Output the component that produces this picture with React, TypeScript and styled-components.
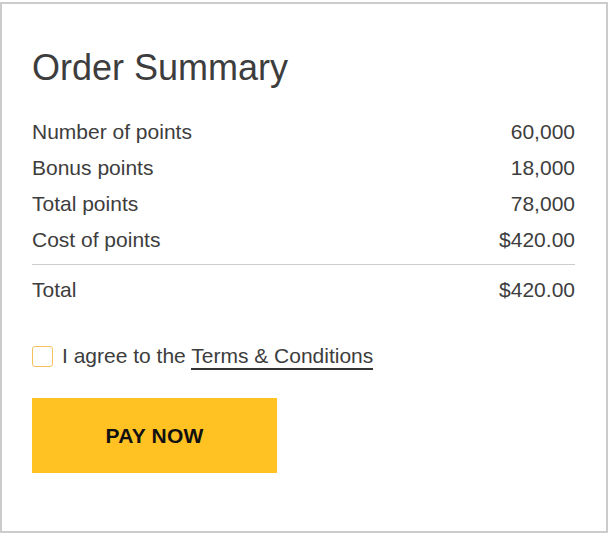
import React from "react";
import styled, { createGlobalStyle } from "styled-components";

const Global = createGlobalStyle`
  html, body { margin: 0; padding: 0; background: #fff; }
  body { font-family: "Liberation Sans", Arial, sans-serif; }
`;

const Page = styled.div`
  padding-top: 2px;
`;

const Card = styled.section`
  box-sizing: border-box;
  width: 608px;
  height: 531px;
  border: 2px solid #cccccc;
  padding: 44px 31px 0 30px;
  color: #3d3d3d;
`;

const Title = styled.h1`
  margin: 0 0 26px;
  font-size: 36px;
  font-weight: 400;
  line-height: 40px;
  color: #3d3d3d;
`;

const Row = styled.div`
  display: flex;
  justify-content: space-between;
  align-items: center;
  height: 36px;
  font-size: 21px;
`;

const Divider = styled.hr`
  margin: 6px 0 7px;
  border: 0;
  border-top: 1px solid #cccccc;
`;

const Agree = styled.label`
  display: flex;
  align-items: center;
  gap: 9px;
  height: 24px;
  margin-top: 36px;
  font-size: 21px;
  color: #3d3d3d;
`;

const Box = styled.span`
  box-sizing: border-box;
  width: 21px;
  height: 21px;
  border: 1px solid #f6c15a;
  border-radius: 3px;
`;

const TermsLink = styled.a`
  color: #3d3d3d;
  text-decoration: none;
  border-bottom: 2px solid #333333;
  padding-bottom: 1px;
`;

const PayButton = styled.button`
  display: block;
  margin-top: 30px;
  width: 245px;
  height: 75px;
  border: 0;
  background: #ffc222;
  color: #111111;
  font-family: "Liberation Sans", Arial, sans-serif;
  font-weight: 700;
  font-size: 21px;
  letter-spacing: 0.2px;
  cursor: pointer;
`;

const rows = [
  ["Number of points", "60,000"],
  ["Bonus points", "18,000"],
  ["Total points", "78,000"],
  ["Cost of points", "$420.00"],
];

export default function App() {
  return (
    <Page>
      <Global />
      <Card>
        <Title>Order Summary</Title>
        {rows.map(([k, v]) => (
          <Row key={k}>
            <span>{k}</span>
            <span>{v}</span>
          </Row>
        ))}
        <Divider />
        <Row>
          <span>Total</span>
          <span>$420.00</span>
        </Row>
        <Agree>
          <Box />
          <span>
            I agree to the <TermsLink href="#">Terms &amp; Conditions</TermsLink>
          </span>
        </Agree>
        <PayButton>PAY NOW</PayButton>
      </Card>
    </Page>
  );
}
